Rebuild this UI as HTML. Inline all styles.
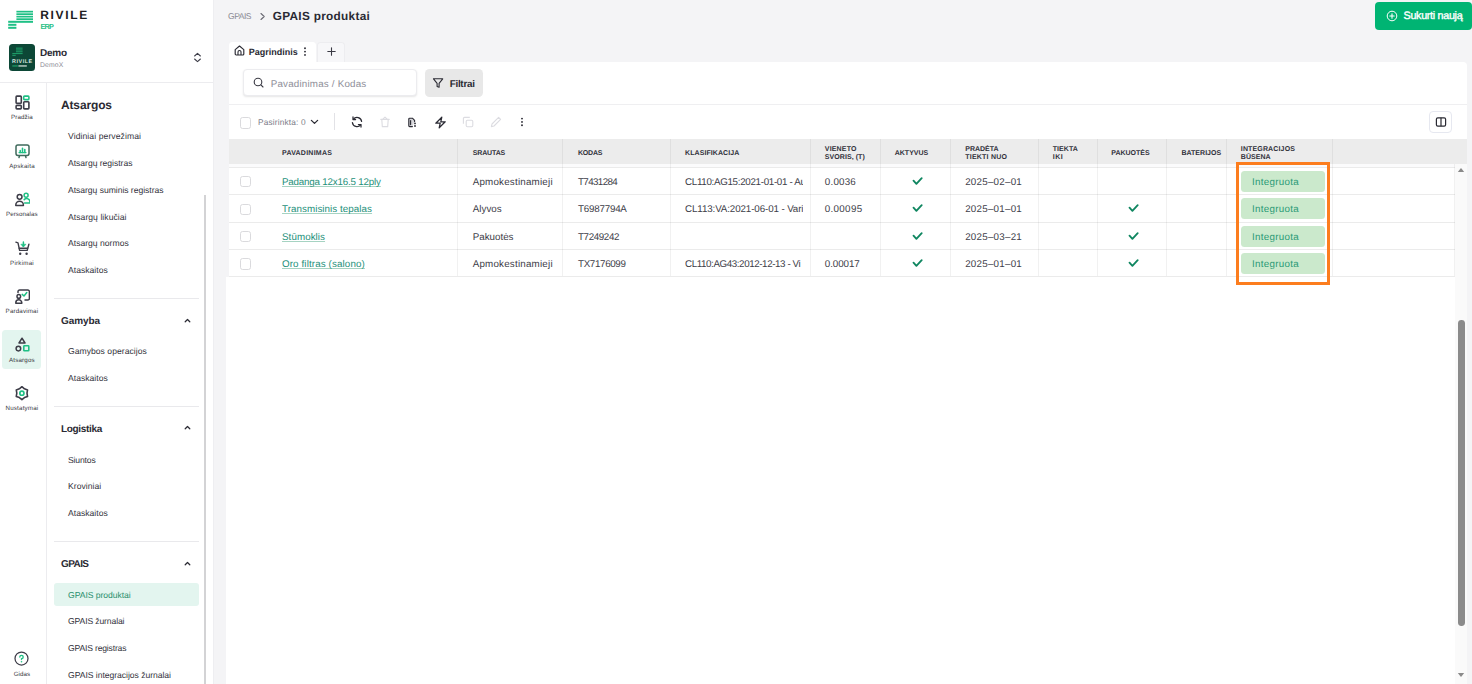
<!DOCTYPE html>
<html lang="lt">
<head>
<meta charset="utf-8">
<title>GPAIS produktai</title>
<style>
*{box-sizing:border-box;margin:0;padding:0}
html,body{width:1472px;height:684px;overflow:hidden;background:#f4f4f6;font-family:"Liberation Sans",sans-serif;color:#2a2a33;text-rendering:geometricPrecision}
.abs{position:absolute}
#side{position:absolute;left:0;top:0;width:214px;height:684px;background:#fff;border-right:1px solid #eeeef1}
.t{position:absolute;white-space:nowrap;line-height:1}
.md{position:absolute;left:54px;width:145px;height:1px;background:#e9e9ec}
.mc{position:absolute;left:184.3px;width:7px;height:5px}
.th{font-weight:700}
.vl{position:absolute;top:139px;width:1px;height:137px;background:rgba(0,0,0,.055)}
.hl{position:absolute;left:229px;width:1226px;height:1px;background:rgba(0,0,0,.08)}
.lk{text-decoration:underline;text-decoration-color:#a6d3c2;text-decoration-thickness:1.3px;text-underline-offset:0.6px;text-decoration-skip-ink:none}
.cb{position:absolute;left:240px;width:10.8px;height:11.4px;border:1.1px solid #dadadd;border-radius:2.6px;background:#fff}
.bd{position:absolute;left:1241.4px;width:83.3px;height:21.1px;border-radius:3.5px;background:#cbe9cc}
.ck{position:absolute;width:9px;height:7px}
</style>
</head>
<body>
<div id="side">
<svg class="abs" style="left:8px;top:10px" width="26" height="20" viewBox="0 0 26 20">
<g fill="#1fc085">
<rect x="8.4" y="0.8" width="16.6" height="1.7"/>
<rect x="8.4" y="3.3" width="16.6" height="1.7"/>
<rect x="8.4" y="5.8" width="16.6" height="1.7"/>
<rect x="8.4" y="8.3" width="16.6" height="1.7"/>
<rect x="0.2" y="10.8" width="24.8" height="2"/>
<rect x="0.2" y="13.8" width="8.2" height="2"/>
<rect x="0.2" y="16.8" width="8.2" height="2"/>
</g></svg>
<div id="t1" class="t" style="left:40.3px;top:9px;font-size:12px;color:#1d1d1f;font-weight:700;letter-spacing:1.646px;">RIVILE</div>
<div id="t2" class="t" style="left:40.5px;top:23px;font-size:7.3px;color:#1fc085;font-weight:700;letter-spacing:-0.758px;">ERP</div>
<div class="abs" style="left:8.6px;top:44.2px;width:26.3px;height:26.7px;border-radius:3.5px;background:#0c4736"></div>
<svg class="abs" style="left:8.6px;top:44.2px" width="27" height="27" viewBox="0 0 27 27">
<g fill="#1d9a66"><rect x="7" y="3.6" width="6.6" height="1.1"/><rect x="7" y="5.4" width="6.6" height="1.1"/><rect x="7" y="7.2" width="6.6" height="1.1"/><rect x="3.3" y="9" width="10.3" height="1.1"/><rect x="3.3" y="10.8" width="3.4" height="1.1"/></g>
<text x="3.1" y="18.7" font-family="Liberation Sans" font-weight="700" font-size="5.4" letter-spacing="0.55" fill="#d9e6e0">RIVILE</text>
<rect x="3.3" y="21.3" width="5.5" height="1.3" fill="#1d9a66"/><rect x="9.4" y="21.3" width="8.4" height="1.3" fill="#cfdcd6"/>
</svg>
<div id="t3" class="t" style="left:40px;top:49px;font-size:10px;color:#2a2a33;font-weight:700;letter-spacing:-0.266px;">Demo</div>
<div id="t4" class="t" style="left:40px;top:63px;font-size:6.8px;color:#8a8a96;letter-spacing:0.132px;">DemoX</div>
<svg class="abs" style="left:193px;top:52px" width="9" height="11" viewBox="0 0 9 11"><path d="M1.6 4 L4.5 1.4 L7.4 4 M1.6 7 L4.5 9.6 L7.4 7" fill="none" stroke="#3d3d48" stroke-width="1.1" stroke-linecap="round" stroke-linejoin="round"/></svg>
<div class="abs" style="left:0;top:82px;width:213px;height:1px;background:#ececef"></div>
<div class="abs" style="left:46px;top:82px;width:1px;height:602px;background:#ececef"></div>
<div class="abs" style="left:2px;top:330px;width:39.2px;height:39px;border-radius:3.5px;background:#e3f5ef"></div>
<svg class="abs" style="left:14.5px;top:95.3px" width="15" height="15" viewBox="0 0 15 15"><g fill="none" stroke-width="1.6" stroke-linejoin="round"><rect x="1.1" y="1.1" width="5.2" height="7.2" rx="0.8" stroke="#3d3d48"/><rect x="1.1" y="10.4" width="5.2" height="3.5" rx="0.8" stroke="#3d3d48"/><rect x="8.7" y="6.7" width="5.2" height="7.2" rx="0.8" stroke="#3d3d48"/><rect x="8.7" y="1.1" width="5.2" height="3.5" rx="0.8" stroke="#1fc085"/></g></svg>
<div id="t5" class="t" style="left:10.9px;top:115px;font-size:6.2px;color:#3a3a44;letter-spacing:0.153px;">Pradžia</div>
<svg class="abs" style="left:14.5px;top:143.7px" width="15" height="15" viewBox="0 0 15 15"><g fill="none" stroke-width="1.5" stroke-linecap="round" stroke-linejoin="round"><rect x="1" y="1" width="13" height="10.4" rx="1.8" stroke="#3f6a5c"/><path d="M4.4 12 L4 13.6 M10.6 12 L11 13.6" stroke="#3f6a5c"/><path d="M4 8.6 H11" stroke="#1fc085" stroke-width="1.2"/><path d="M5.2 8.4 V6.6 M7.5 8.4 V4.2 M9.8 8.4 V5.6" stroke="#1fc085" stroke-width="1.6"/></g></svg>
<div id="t6" class="t" style="left:9.2px;top:164px;font-size:6.2px;color:#3a3a44;letter-spacing:0.238px;">Apskaita</div>
<svg class="abs" style="left:14.5px;top:192.1px" width="15" height="15" viewBox="0 0 15 15"><g fill="none" stroke-width="1.5" stroke-linecap="round" stroke-linejoin="round"><circle cx="11.1" cy="3.2" r="2" stroke="#1fc085"/><path d="M9.6 10.9 H15 V10.2 A3.4 3.4 0 0 0 9.2 7.6" stroke="#1fc085"/><circle cx="4.6" cy="4.8" r="2.4" stroke="#3d3d48"/><path d="M0.8 13.6 V13 A3.8 3.8 0 0 1 8.4 13 V13.6 Z" stroke="#3d3d48"/></g></svg>
<div id="t7" class="t" style="left:6.0px;top:212px;font-size:6.2px;color:#3a3a44;letter-spacing:0.081px;">Personalas</div>
<svg class="abs" style="left:14.5px;top:240.5px" width="15" height="15" viewBox="0 0 15 15"><g fill="none" stroke-width="1.4" stroke-linecap="round" stroke-linejoin="round"><path d="M0.9 1.2 L3 1.8 L4.6 9.4 H12.2 L13.9 3.2" stroke="#3d3d48"/><path d="M4.2 7.2 H12.6" stroke="#3d3d48"/><circle cx="5.2" cy="12.7" r="1.2" fill="#3d3d48" stroke="none"/><circle cx="11.6" cy="12.7" r="1.2" fill="#3d3d48" stroke="none"/><path d="M8.4 1 V5" stroke="#1fc085" stroke-width="1.5"/><path d="M6.2 3.6 L8.4 6 L10.6 3.6 Z" fill="#1fc085" stroke="#1fc085" stroke-width="0.8"/></g></svg>
<div id="t8" class="t" style="left:10.1px;top:261px;font-size:6.2px;color:#3a3a44;letter-spacing:0.226px;">Pirkimai</div>
<svg class="abs" style="left:14.5px;top:288.9px" width="15" height="15" viewBox="0 0 15 15"><g fill="none" stroke-width="1.5" stroke-linecap="round" stroke-linejoin="round"><path d="M3 3.6 V2.6 A1.6 1.6 0 0 1 4.6 1 H12.8 A1.6 1.6 0 0 1 14.4 2.6 V9.4 A1.6 1.6 0 0 1 12.8 11 H10" stroke="#3d3d48"/><circle cx="3.8" cy="7.4" r="1.8" stroke="#3d3d48"/><path d="M0.8 14.2 V13.8 A3 3 0 0 1 6.8 13.8 V14.2 Z" stroke="#3d3d48"/><path d="M7.2 5.4 L9 7 L11.8 3.6" stroke="#1fc085" stroke-width="1.5"/></g></svg>
<div id="t9" class="t" style="left:5.6px;top:309px;font-size:6.2px;color:#3a3a44;letter-spacing:0.172px;">Pardavimai</div>
<svg class="abs" style="left:14.5px;top:337.3px" width="15" height="15" viewBox="0 0 15 15"><g fill="none" stroke-width="1.5" stroke-linejoin="round"><path d="M7 1.2 L10 6 H4 Z" stroke="#3d3d48"/><circle cx="3.4" cy="11.6" r="2.3" stroke="#3d3d48"/><rect x="8.8" y="8.8" width="5" height="5" rx="0.6" stroke="#1fc085" stroke-width="1.6"/></g></svg>
<div id="t10" class="t" style="left:9.1px;top:358px;font-size:6.2px;color:#3a3a44;letter-spacing:0.154px;">Atsargos</div>
<svg class="abs" style="left:14.5px;top:385.7px" width="15" height="15" viewBox="0 0 15 15"><g fill="none" stroke-linejoin="round"><path d="M6.90 0.70 L9.45 2.78 L12.53 3.95 L12.00 7.20 L12.53 10.45 L9.45 11.62 L6.90 13.70 L4.35 11.62 L1.27 10.45 L1.80 7.20 L1.27 3.95 L4.35 2.78 Z" stroke="#3d3d48" stroke-width="1.6"/><circle cx="6.9" cy="7.2" r="2.05" stroke="#1fc085" stroke-width="1.7"/></g></svg>
<div id="t11" class="t" style="left:5.5px;top:406px;font-size:6.2px;color:#3a3a44;letter-spacing:0.194px;">Nustatymai</div>
<svg class="abs" style="left:14.3px;top:651.4px" width="15" height="15" viewBox="0 0 15 15"><g fill="none" stroke-linecap="round" stroke-linejoin="round"><circle cx="7.5" cy="7.5" r="6.5" stroke="#3d3d48" stroke-width="1.25"/><path d="M5.8 6 A1.7 1.7 0 1 1 7.5 7.7 V8.6" stroke="#1fc085" stroke-width="1.35"/><circle cx="7.5" cy="10.7" r="0.8" fill="#1fc085" stroke="none"/></g></svg>
<div id="t12" class="t" style="left:13.7px;top:672px;font-size:6.2px;color:#3a3a44;letter-spacing:0.082px;">Gidas</div>
<div id="t13" class="t" style="left:61px;top:99px;font-size:12px;color:#2a2a33;font-weight:700;letter-spacing:-0.145px;">Atsargos</div>
<div class="abs" style="left:54.2px;top:583.4px;width:144.8px;height:22.5px;border-radius:3px;background:#e3f5ef"></div>
<div id="t14" class="t" style="left:68px;top:132px;font-size:8.6px;color:#33333d;letter-spacing:0.083px;">Vidiniai pervežimai</div>
<div id="t15" class="t" style="left:68px;top:159px;font-size:8.6px;color:#33333d;letter-spacing:-0.029px;">Atsargų registras</div>
<div id="t16" class="t" style="left:68px;top:186px;font-size:8.6px;color:#33333d;letter-spacing:-0.041px;">Atsargų suminis registras</div>
<div id="t17" class="t" style="left:68px;top:213px;font-size:8.6px;color:#33333d;letter-spacing:0.047px;">Atsargų likučiai</div>
<div id="t18" class="t" style="left:68px;top:239px;font-size:8.6px;color:#33333d;letter-spacing:0.006px;">Atsargų normos</div>
<div id="t19" class="t" style="left:68px;top:266px;font-size:8.6px;color:#33333d;letter-spacing:0.010px;">Ataskaitos</div>
<div id="t20" class="t" style="left:68px;top:347px;font-size:8.6px;color:#33333d;letter-spacing:0.024px;">Gamybos operacijos</div>
<div id="t21" class="t" style="left:68px;top:374px;font-size:8.6px;color:#33333d;letter-spacing:0.010px;">Ataskaitos</div>
<div id="t22" class="t" style="left:68px;top:456px;font-size:8.6px;color:#33333d;letter-spacing:-0.154px;">Siuntos</div>
<div id="t23" class="t" style="left:68px;top:482px;font-size:8.6px;color:#33333d;letter-spacing:0.035px;">Kroviniai</div>
<div id="t24" class="t" style="left:68px;top:509px;font-size:8.6px;color:#33333d;letter-spacing:0.010px;">Ataskaitos</div>
<div id="t25" class="t" style="left:68px;top:591px;font-size:8.6px;color:#2a8f6d;letter-spacing:-0.045px;">GPAIS produktai</div>
<div id="t26" class="t" style="left:68px;top:617px;font-size:8.6px;color:#33333d;letter-spacing:-0.125px;">GPAIS žurnalai</div>
<div id="t27" class="t" style="left:68px;top:644px;font-size:8.6px;color:#33333d;letter-spacing:-0.177px;">GPAIS registras</div>
<div id="t28" class="t" style="left:68px;top:671px;font-size:8.6px;color:#33333d;letter-spacing:-0.037px;">GPAIS integracijos žurnalai</div>
<div id="t29" class="t" style="left:61px;top:317px;font-size:10px;color:#2a2a33;font-weight:700;letter-spacing:-0.094px;">Gamyba</div>
<svg class="mc" style="top:318.0px" viewBox="0 0 7 5"><path d="M1.2 3.8 L3.5 1.5 L5.8 3.8" fill="none" stroke="#2a2a33" stroke-width="1.25" stroke-linecap="round" stroke-linejoin="round"/></svg>
<div id="t30" class="t" style="left:61px;top:425px;font-size:10px;color:#2a2a33;font-weight:700;letter-spacing:-0.332px;">Logistika</div>
<svg class="mc" style="top:425.4px" viewBox="0 0 7 5"><path d="M1.2 3.8 L3.5 1.5 L5.8 3.8" fill="none" stroke="#2a2a33" stroke-width="1.25" stroke-linecap="round" stroke-linejoin="round"/></svg>
<div id="t31" class="t" style="left:61px;top:560px;font-size:10px;color:#2a2a33;font-weight:700;letter-spacing:-0.598px;">GPAIS</div>
<svg class="mc" style="top:560.8px" viewBox="0 0 7 5"><path d="M1.2 3.8 L3.5 1.5 L5.8 3.8" fill="none" stroke="#2a2a33" stroke-width="1.25" stroke-linecap="round" stroke-linejoin="round"/></svg>
<div class="md" style="top:298px"></div>
<div class="md" style="top:406px"></div>
<div class="md" style="top:541px"></div>
<div class="abs" style="left:203.5px;top:194.6px;width:2px;height:490px;background:#d3d3d5"></div>
</div>
<div id="main">
<div id="t32" class="t" style="left:228px;top:12px;font-size:8.5px;color:#8a8a94;letter-spacing:-0.465px;">GPAIS</div>
<svg class="abs" style="left:258.5px;top:11.5px" width="7" height="9" viewBox="0 0 7 9"><path d="M2 1.5 L5.2 4.5 L2 7.5" fill="none" stroke="#6a6a74" stroke-width="1.1" stroke-linecap="round" stroke-linejoin="round"/></svg>
<div id="t33" class="t" style="left:272.8px;top:11px;font-size:11.8px;color:#2a2a33;font-weight:700;letter-spacing:0.296px;">GPAIS produktai</div>
<div class="abs" style="left:1375.4px;top:1.7px;width:96.8px;height:28px;border-radius:4px;background:#00b473"></div>
<svg class="abs" style="left:1386px;top:9.8px" width="12" height="12" viewBox="0 0 12 12"><circle cx="6" cy="6" r="4.8" fill="none" stroke="#fff" stroke-width="1"/><path d="M6 3.8 V8.2 M3.8 6 H8.2" stroke="#fff" stroke-width="1.1" stroke-linecap="round"/></svg>
<div id="t34" class="t" style="left:1403.5px;top:11px;font-size:10.8px;color:#fff;letter-spacing:-0.319px;-webkit-text-stroke:0.35px #fff;">Sukurti naują</div>
<div class="abs" style="left:228.8px;top:41.8px;width:87.3px;height:22px;border-radius:3.5px 3.5px 0 0;background:#fff"></div>
<div class="abs" style="left:317.2px;top:41.8px;width:28.2px;height:20.2px;border-radius:3.5px 3.5px 0 0;background:#f7f7f9;border:1px solid #ededf0;border-bottom:none"></div>
<svg class="abs" style="left:234px;top:45.4px" width="11" height="11" viewBox="0 0 11 11"><path d="M1.2 4.6 L5.5 1 L9.8 4.6 V9 A1 1 0 0 1 8.8 10 H2.2 A1 1 0 0 1 1.2 9 Z" fill="none" stroke="#2a2a33" stroke-width="1.15" stroke-linejoin="round"/><path d="M4 10 V7 A1.5 1.5 0 0 1 7 7 V10" fill="none" stroke="#2a2a33" stroke-width="1.1"/></svg>
<div id="t35" class="t" style="left:248.7px;top:48px;font-size:9px;color:#2a2a33;font-weight:700;letter-spacing:0.018px;">Pagrindinis</div>
<svg class="abs" style="left:302.8px;top:47px" width="4" height="10" viewBox="0 0 4 10"><circle cx="2" cy="1.3" r="0.95" fill="#2a2a33"/><circle cx="2" cy="4.6" r="0.95" fill="#2a2a33"/><circle cx="2" cy="7.9" r="0.95" fill="#2a2a33"/></svg>
<svg class="abs" style="left:326.7px;top:46.5px" width="9" height="9" viewBox="0 0 9 9"><path d="M4.5 0.8 V8.2 M0.8 4.5 H8.2" stroke="#3a3a44" stroke-width="1.1" stroke-linecap="round"/></svg>
<div class="abs" style="left:228.8px;top:62px;width:1238.2px;height:622px;background:#fff;border-radius:0 4px 0 0"></div>
<div class="abs" style="left:243px;top:69.2px;width:174px;height:26.8px;border-radius:4px;background:#fff;border:1px solid #ececef;box-shadow:0 1px 2px rgba(0,0,0,.10)"></div>
<svg class="abs" style="left:253px;top:77.3px" width="12" height="12" viewBox="0 0 12 12"><circle cx="5" cy="5" r="3.8" fill="none" stroke="#3a3a44" stroke-width="1.1"/><path d="M7.9 7.9 L10 10" stroke="#3a3a44" stroke-width="1.1" stroke-linecap="round"/></svg>
<div id="t36" class="t" style="left:270.7px;top:80px;font-size:9.8px;color:#8e8e98;letter-spacing:0.197px;">Pavadinimas / Kodas</div>
<div class="abs" style="left:424.8px;top:68.8px;width:58px;height:28px;border-radius:4.5px;background:#e8e8e8"></div>
<svg class="abs" style="left:432px;top:76.9px" width="12" height="12" viewBox="0 0 12 12"><path d="M1.5 1.8 H10.7 L7.1 6.4 V10.2 L5.1 9.4 V6.4 Z" fill="none" stroke="#2a2a33" stroke-width="1.1" stroke-linejoin="round"/></svg>
<div id="t37" class="t" style="left:449.7px;top:80px;font-size:9.8px;color:#2a2a33;font-weight:700;letter-spacing:-0.248px;">Filtrai</div>
<div class="abs" style="left:228.8px;top:104px;width:1238.2px;height:1px;background:#efeff1"></div>
<div class="cb" style="top:117.2px"></div>
<div id="t38" class="t" style="left:258px;top:118px;font-size:8.3px;color:#7c7c88;letter-spacing:0.154px;">Pasirinkta: 0</div>
<svg class="abs" style="left:310px;top:119px" width="9" height="6" viewBox="0 0 9 6"><path d="M1.4 1.4 L4.5 4.4 L7.6 1.4" fill="none" stroke="#2a2a33" stroke-width="1.3" stroke-linecap="round" stroke-linejoin="round"/></svg>
<div class="abs" style="left:334px;top:113px;width:1px;height:17px;background:#e2e2e6"></div>
<svg class="abs" style="left:351px;top:116px" width="12" height="12" viewBox="0 0 12 12"><g fill="none" stroke="#2a2a33" stroke-width="1.25" stroke-linecap="round" stroke-linejoin="round"><path d="M10.6 5.4 A4.6 4.6 0 0 0 2.4 3.2"/><path d="M1.4 6.6 A4.6 4.6 0 0 0 9.6 8.8"/><path d="M2 0.9 V3.5 H4.6"/><path d="M10 11.1 V8.5 H7.4"/></g></svg>
<svg class="abs" style="left:379px;top:116px" width="12" height="12" viewBox="0 0 12 12"><g fill="none" stroke="#dcdce1" stroke-width="1.1" stroke-linecap="round" stroke-linejoin="round"><path d="M1.8 3.4 H10.2 M3.8 3.2 L6 1.2 L8.2 3.2 M2.8 3.6 L3.3 10.6 H8.7 L9.2 3.6"/></g></svg>
<svg class="abs" style="left:407px;top:116.5px" width="11" height="11" viewBox="0 0 11 11"><g stroke="#2a2a33" stroke-width="1.15" stroke-linecap="round" stroke-linejoin="round"><path d="M5.4 9.6 H2.6 A0.8 0.8 0 0 1 1.8 8.8 V2 A0.8 0.8 0 0 1 2.6 1.2 H5.4 L7.6 3.4 V4.6" fill="#d8d8dc"/><path d="M3.6 3.6 V7.6" fill="none"/></g><circle cx="8" cy="6.4" r="0.9" fill="#2a2a33"/><circle cx="8" cy="9" r="0.9" fill="#2a2a33"/></svg>
<svg class="abs" style="left:433.5px;top:115.6px" width="13" height="13" viewBox="0 0 13 13"><path d="M7.8 1.2 L1.8 7.2 H6.2 L5.2 11.8 L11.2 5.8 H6.8 Z" fill="none" stroke="#2a2a33" stroke-width="1.25" stroke-linejoin="round"/></svg>
<svg class="abs" style="left:461.5px;top:116px" width="12" height="12" viewBox="0 0 12 12"><g fill="none" stroke="#dcdce1" stroke-width="1.1" stroke-linejoin="round"><rect x="4.2" y="4.2" width="6.6" height="6.6" rx="1.2"/><path d="M7.8 1.4 H2.6 A1.2 1.2 0 0 0 1.4 2.6 V7.8"/></g></svg>
<svg class="abs" style="left:490px;top:116px" width="12" height="12" viewBox="0 0 12 12"><path d="M1.4 10.6 L2 8 L8.6 1.4 L10.6 3.4 L4 10 Z" fill="none" stroke="#dcdce1" stroke-width="1.1" stroke-linejoin="round"/></svg>
<svg class="abs" style="left:520.2px;top:117.2px" width="4" height="10" viewBox="0 0 4 10"><circle cx="2" cy="1.6" r="0.95" fill="#2a2a33"/><circle cx="2" cy="4.9" r="0.95" fill="#2a2a33"/><circle cx="2" cy="8.2" r="0.95" fill="#2a2a33"/></svg>
<div class="abs" style="left:1429px;top:111px;width:23px;height:22px;border-radius:4px;background:#fff;border:1px solid #e6e8f0"></div>
<svg class="abs" style="left:1434.5px;top:116px" width="12" height="12" viewBox="0 0 12 12"><rect x="1.4" y="1.8" width="9.2" height="8.4" rx="1.4" fill="none" stroke="#2a2a33" stroke-width="1.2"/><path d="M6 1.8 V10.2" stroke="#2a2a33" stroke-width="1.2"/></svg>
<div class="abs" style="left:228.8px;top:139px;width:1238.2px;height:24.7px;background:#ececec"></div>
<div class="abs" style="left:228.8px;top:163.7px;width:1226px;height:3px;background:#fbfbfc"></div>
<div class="vl" style="left:457.2px"></div>
<div class="vl" style="left:562.3px"></div>
<div class="vl" style="left:669.9px"></div>
<div class="vl" style="left:810px"></div>
<div class="vl" style="left:879.9px"></div>
<div class="vl" style="left:949.8px"></div>
<div class="vl" style="left:1037.7px"></div>
<div class="vl" style="left:1096.6px"></div>
<div class="vl" style="left:1166.3px"></div>
<div class="vl" style="left:1226.2px"></div>
<div class="vl" style="left:1331.5px"></div>
<div class="vl" style="left:1453.9px;top:164px;height:112px"></div>
<div class="hl" style="top:166.7px"></div>
<div class="hl" style="top:194.1px"></div>
<div class="hl" style="top:221.5px"></div>
<div class="hl" style="top:248.9px"></div>
<div class="hl" style="top:276.2px"></div>
<div id="t39" class="t th" style="left:282px;top:150px;font-size:7px;color:#30303a;letter-spacing:0.245px;">PAVADINIMAS</div>
<div id="t40" class="t th" style="left:472.7px;top:150px;font-size:7px;color:#30303a;letter-spacing:-0.121px;">SRAUTAS</div>
<div id="t41" class="t th" style="left:578px;top:150px;font-size:7px;color:#30303a;letter-spacing:-0.195px;">KODAS</div>
<div id="t42" class="t th" style="left:685px;top:150px;font-size:7px;color:#30303a;letter-spacing:0.085px;">KLASIFIKACIJA</div>
<div id="t43" class="t th" style="left:824.8px;top:146px;font-size:7px;color:#30303a;letter-spacing:0.165px;">VIENETO</div>
<div id="t44" class="t th" style="left:824.8px;top:154px;font-size:7px;color:#30303a;letter-spacing:0.072px;">SVORIS, (T)</div>
<div id="t45" class="t th" style="left:894.7px;top:150px;font-size:7px;color:#30303a;letter-spacing:0.024px;">AKTYVUS</div>
<div id="t46" class="t th" style="left:965.3px;top:146px;font-size:7px;color:#30303a;letter-spacing:-0.021px;">PRADĖTA</div>
<div id="t47" class="t th" style="left:965.3px;top:154px;font-size:7px;color:#30303a;letter-spacing:0.214px;">TIEKTI NUO</div>
<div id="t48" class="t th" style="left:1052.8px;top:146px;font-size:7px;color:#30303a;letter-spacing:0.047px;">TIEKTA</div>
<div id="t49" class="t th" style="left:1052.8px;top:154px;font-size:7px;color:#30303a;letter-spacing:0.473px;">IKI</div>
<div id="t50" class="t th" style="left:1111.3px;top:150px;font-size:7px;color:#30303a;letter-spacing:-0.011px;">PAKUOTĖS</div>
<div id="t51" class="t th" style="left:1181.4px;top:150px;font-size:7px;color:#30303a;letter-spacing:0.032px;">BATERIJOS</div>
<div id="t52" class="t th" style="left:1240.8px;top:146px;font-size:7px;color:#30303a;letter-spacing:0.144px;">INTEGRACIJOS</div>
<div id="t53" class="t th" style="left:1240.8px;top:154px;font-size:7px;color:#30303a;letter-spacing:0.048px;">BŪSENA</div>
<div class="cb" style="top:176.1px"></div>
<div id="t54" class="t lk" style="left:282px;top:178px;font-size:9.8px;color:#24907a;letter-spacing:-0.198px;">Padanga 12x16.5 12ply</div>
<div id="t55" class="t" style="left:472.7px;top:178px;font-size:9.8px;color:#3d3d48;letter-spacing:0.208px;">Apmokestinamieji</div>
<div id="t56" class="t" style="left:578px;top:178px;font-size:9.8px;color:#3d3d48;letter-spacing:-0.618px;">T7431284</div>
<div id="t57" class="t" style="left:685px;top:178px;font-size:9.8px;color:#3d3d48;letter-spacing:-0.316px;width:118px;overflow:hidden;">CL110:AG15:2021-01-01 - Au</div>
<div id="t58" class="t" style="left:824.8px;top:178px;font-size:9.8px;color:#3d3d48;letter-spacing:0.206px;">0.0036</div>
<svg class="abs" style="left:911px;top:176.0px" width="13" height="11" viewBox="0 0 13 11"><path d="M2.5 4.7 L5.4 7.8 L10.7 2.2" fill="none" stroke="#0f8660" stroke-width="1.85" stroke-linecap="round" stroke-linejoin="round"/></svg>
<div id="t59" class="t" style="left:965.2px;top:178px;font-size:9.8px;color:#3d3d48;letter-spacing:0.233px;">2025–02–01</div>
<div class="bd" style="top:170.80px"></div>
<div id="t60" class="t" style="left:1252px;top:178px;font-size:9.8px;color:#2a9a76;letter-spacing:0.275px;">Integruota</div>
<div class="cb" style="top:203.5px"></div>
<div id="t61" class="t lk" style="left:282px;top:205px;font-size:9.8px;color:#24907a;letter-spacing:0.056px;">Transmisinis tepalas</div>
<div id="t62" class="t" style="left:472.7px;top:205px;font-size:9.8px;color:#3d3d48;letter-spacing:0.028px;">Alyvos</div>
<div id="t63" class="t" style="left:578px;top:205px;font-size:9.8px;color:#3d3d48;letter-spacing:-0.221px;">T6987794A</div>
<div id="t64" class="t" style="left:685px;top:205px;font-size:9.8px;color:#3d3d48;letter-spacing:-0.118px;width:118px;overflow:hidden;">CL113:VA:2021-06-01 - Vari</div>
<div id="t65" class="t" style="left:824.8px;top:205px;font-size:9.8px;color:#3d3d48;letter-spacing:0.313px;">0.00095</div>
<svg class="abs" style="left:911px;top:203.4px" width="13" height="11" viewBox="0 0 13 11"><path d="M2.5 4.7 L5.4 7.8 L10.7 2.2" fill="none" stroke="#0f8660" stroke-width="1.85" stroke-linecap="round" stroke-linejoin="round"/></svg>
<div id="t66" class="t" style="left:965.2px;top:205px;font-size:9.8px;color:#3d3d48;letter-spacing:0.233px;">2025–01–01</div>
<svg class="abs" style="left:1126.8px;top:203.4px" width="13" height="11" viewBox="0 0 13 11"><path d="M2.5 4.7 L5.4 7.8 L10.7 2.2" fill="none" stroke="#0f8660" stroke-width="1.85" stroke-linecap="round" stroke-linejoin="round"/></svg>
<div class="bd" style="top:198.17px"></div>
<div id="t67" class="t" style="left:1252px;top:205px;font-size:9.8px;color:#2a9a76;letter-spacing:0.275px;">Integruota</div>
<div class="cb" style="top:230.8px"></div>
<div id="t68" class="t lk" style="left:282px;top:233px;font-size:9.8px;color:#24907a;letter-spacing:0.066px;">Stūmoklis</div>
<div id="t69" class="t" style="left:472.7px;top:233px;font-size:9.8px;color:#3d3d48;letter-spacing:-0.008px;">Pakuotės</div>
<div id="t70" class="t" style="left:578px;top:233px;font-size:9.8px;color:#3d3d48;letter-spacing:-0.389px;">T7249242</div>
<svg class="abs" style="left:911px;top:230.7px" width="13" height="11" viewBox="0 0 13 11"><path d="M2.5 4.7 L5.4 7.8 L10.7 2.2" fill="none" stroke="#0f8660" stroke-width="1.85" stroke-linecap="round" stroke-linejoin="round"/></svg>
<div id="t71" class="t" style="left:965.2px;top:233px;font-size:9.8px;color:#3d3d48;letter-spacing:0.233px;">2025–03–21</div>
<svg class="abs" style="left:1126.8px;top:230.7px" width="13" height="11" viewBox="0 0 13 11"><path d="M2.5 4.7 L5.4 7.8 L10.7 2.2" fill="none" stroke="#0f8660" stroke-width="1.85" stroke-linecap="round" stroke-linejoin="round"/></svg>
<div class="bd" style="top:225.54px"></div>
<div id="t72" class="t" style="left:1252px;top:233px;font-size:9.8px;color:#2a9a76;letter-spacing:0.275px;">Integruota</div>
<div class="cb" style="top:258.2px"></div>
<div id="t73" class="t lk" style="left:282px;top:260px;font-size:9.8px;color:#24907a;letter-spacing:0.117px;">Oro filtras (salono)</div>
<div id="t74" class="t" style="left:472.7px;top:260px;font-size:9.8px;color:#3d3d48;letter-spacing:0.208px;">Apmokestinamieji</div>
<div id="t75" class="t" style="left:578px;top:260px;font-size:9.8px;color:#3d3d48;letter-spacing:-0.346px;">TX7176099</div>
<div id="t76" class="t" style="left:685px;top:260px;font-size:9.8px;color:#3d3d48;letter-spacing:-0.412px;width:118px;overflow:hidden;">CL110:AG43:2012-12-13 - Vi</div>
<div id="t77" class="t" style="left:824.8px;top:260px;font-size:9.8px;color:#3d3d48;letter-spacing:-0.070px;">0.00017</div>
<svg class="abs" style="left:911px;top:258.1px" width="13" height="11" viewBox="0 0 13 11"><path d="M2.5 4.7 L5.4 7.8 L10.7 2.2" fill="none" stroke="#0f8660" stroke-width="1.85" stroke-linecap="round" stroke-linejoin="round"/></svg>
<div id="t78" class="t" style="left:965.2px;top:260px;font-size:9.8px;color:#3d3d48;letter-spacing:0.233px;">2025–01–01</div>
<svg class="abs" style="left:1126.8px;top:258.1px" width="13" height="11" viewBox="0 0 13 11"><path d="M2.5 4.7 L5.4 7.8 L10.7 2.2" fill="none" stroke="#0f8660" stroke-width="1.85" stroke-linecap="round" stroke-linejoin="round"/></svg>
<div class="bd" style="top:252.91px"></div>
<div id="t79" class="t" style="left:1252px;top:260px;font-size:9.8px;color:#2a9a76;letter-spacing:0.275px;">Integruota</div>
<div class="abs" style="left:226px;top:277.2px;width:3px;height:407px;background:#fff"></div>
<div class="abs" style="left:1236px;top:162.2px;width:94px;height:123px;border:3.8px solid #fc7d1e"></div>
<div class="abs" style="left:1455px;top:164px;width:12px;height:520px;background:#fafafa"></div>
<div class="abs" style="left:1458.1px;top:320.2px;width:6.8px;height:306px;border-radius:3.4px;background:#8b8b8b"></div>
<svg class="abs" style="left:1457.4px;top:167.4px" width="8" height="6" viewBox="0 0 8 6"><path d="M4 1 L7.2 5 H0.8 Z" fill="#8a8a8a"/></svg>
<svg class="abs" style="left:1457.4px;top:671.7px" width="8" height="6" viewBox="0 0 8 6"><path d="M4 5 L7.2 1 H0.8 Z" fill="#8a8a8a"/></svg>
</div>
</body>
</html>
